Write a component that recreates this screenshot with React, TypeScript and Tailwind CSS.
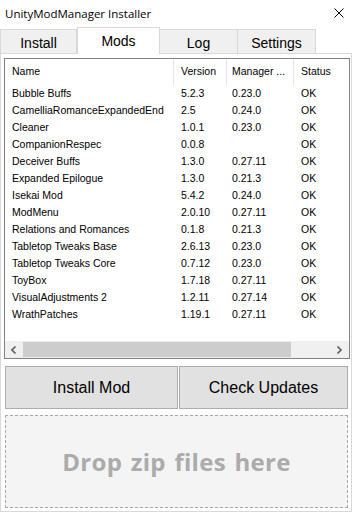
import React from "react";

const mods: [string, string, string, string][] = [
  ["Bubble Buffs", "5.2.3", "0.23.0", "OK"],
  ["CamelliaRomanceExpandedEnd", "2.5", "0.24.0", "OK"],
  ["Cleaner", "1.0.1", "0.23.0", "OK"],
  ["CompanionRespec", "0.0.8", "", "OK"],
  ["Deceiver Buffs", "1.3.0", "0.27.11", "OK"],
  ["Expanded Epilogue", "1.3.0", "0.21.3", "OK"],
  ["Isekai Mod", "5.4.2", "0.24.0", "OK"],
  ["ModMenu", "2.0.10", "0.27.11", "OK"],
  ["Relations and Romances", "0.1.8", "0.21.3", "OK"],
  ["Tabletop Tweaks Base", "2.6.13", "0.23.0", "OK"],
  ["Tabletop Tweaks Core", "0.7.12", "0.23.0", "OK"],
  ["ToyBox", "1.7.18", "0.27.11", "OK"],
  ["VisualAdjustments 2", "1.2.11", "0.27.14", "OK"],
  ["WrathPatches", "1.19.1", "0.27.11", "OK"],
];

const cols = "grid grid-cols-[169px_53px_67px_1fr]";

export default function App() {
  return (
    <div
      className="w-[353px] h-[513px] bg-white text-black overflow-hidden flex flex-col"
      style={{ fontFamily: '"Liberation Sans", Arial, sans-serif' }}
    >
      {/* Title bar */}
      <div className="h-[27px] flex items-center justify-between pl-[5px] pr-[9px] shrink-0">
        <span
          className="text-[11.5px] leading-none"
          style={{ fontFamily: '"Open Sans", "Noto Sans", sans-serif' }}
        >
          UnityModManager Installer
        </span>
        <svg width="10" height="10" viewBox="0 0 10 10" className="mt-[-1px]">
          <path d="M0.5 0.5 L9.5 9.5 M9.5 0.5 L0.5 9.5" stroke="#000" strokeWidth="1" />
        </svg>
      </div>

      {/* Tabs */}
      <div className="h-[26px] flex items-end shrink-0 relative z-10">
        <div className="w-[77px] h-[24px] bg-[#f0f0f0] border border-b-0 border-[#d9d9d9] flex items-center justify-center pt-[3px] text-[14px]">
          Install
        </div>
        <div className="w-[83px] h-[27px] bg-white border border-b-0 border-[#d9d9d9] flex items-center justify-center text-[14px] mb-[-1px]">
          Mods
        </div>
        <div className="w-[78px] h-[24px] bg-[#f0f0f0] border border-b-0 border-l-0 border-[#d9d9d9] flex items-center justify-center pt-[3px] text-[14px]">
          Log
        </div>
        <div className="w-[78px] h-[24px] bg-[#f0f0f0] border border-b-0 border-l-0 border-[#d9d9d9] flex items-center justify-center pt-[3px] text-[14px]">
          Settings
        </div>
      </div>

      {/* Tab page */}
      <div className="w-[352px] h-[459px] border border-[#d9d9d9] bg-white pt-[4px] pl-[3px] pr-[1px] pb-[3px] flex flex-col shrink-0">
        {/* List view */}
        <div className="w-[346px] h-[301px] border border-[#828282] bg-white flex flex-col shrink-0 text-[10.5px]">
          <div className={`${cols} h-[26px] shrink-0`}>
            <div className="pl-[7px] flex items-center border-r border-[#e5e5e5]">Name</div>
            <div className="pl-[7px] flex items-center border-r border-[#e5e5e5]">Version</div>
            <div className="pl-[5px] flex items-center border-r border-[#e5e5e5]">Manager ...</div>
            <div className="pl-[7px] flex items-center">Status</div>
          </div>
          <div className="flex-1 flex flex-col">
            {mods.map(([n, v, m, s]) => (
              <div key={n} className={`${cols} h-[17px] items-center`}>
                <div className="pl-[7px] whitespace-nowrap">{n}</div>
                <div className="pl-[7px]">{v}</div>
                <div className="pl-[5px]">{m}</div>
                <div className="pl-[7px]">{s}</div>
              </div>
            ))}
          </div>
          {/* Horizontal scrollbar */}
          <div className="h-[17px] bg-[#f0f0f0] flex items-center shrink-0 pr-[2px]">
            <div className="w-[17px] h-full flex items-center justify-center">
              <svg width="6" height="8" viewBox="0 0 6 8">
                <path d="M4.5 0.5 L1 4 L4.5 7.5" fill="none" stroke="#606060" strokeWidth="1.6" />
              </svg>
            </div>
            <div className="w-[268px] h-[15px] bg-[#cdcdcd] ml-[1px]" />
            <div className="flex-1" />
            <div className="w-[17px] h-full flex items-center justify-center">
              <svg width="6" height="8" viewBox="0 0 6 8">
                <path d="M1.5 0.5 L5 4 L1.5 7.5" fill="none" stroke="#606060" strokeWidth="1.6" />
              </svg>
            </div>
          </div>
        </div>

        {/* Buttons */}
        <div className="flex gap-[1px] mt-[7px] ml-[1px] shrink-0">
          <button className="w-[173px] h-[43px] bg-[#e1e1e1] border border-[#adadad] text-[16px]">
            Install Mod
          </button>
          <button className="w-[169px] h-[43px] bg-[#e1e1e1] border border-[#adadad] text-[16px]">
            Check Updates
          </button>
        </div>

        {/* Drop zone */}
        <div className="mt-[6px] ml-[1px] w-[343px] h-[93px] border border-dashed border-[#a8a8a8] bg-[#f4f4f4] flex items-center justify-center shrink-0">
          <span
            className="text-[24px] font-bold text-[#ababab] tracking-[0.3px] [word-spacing:2px]"
            style={{ fontFamily: '"Open Sans", "Noto Sans", sans-serif' }}
          >
            Drop zip files here
          </span>
        </div>
      </div>
    </div>
  );
}
